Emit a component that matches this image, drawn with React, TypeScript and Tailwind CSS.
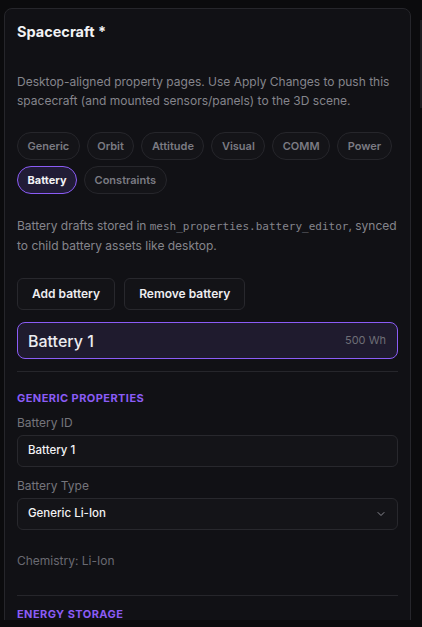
import React from "react";

const tabs = ["Generic", "Orbit", "Attitude", "Visual", "COMM", "Power"];

export default function App() {
  return (
    <div
      className="relative h-[627px] w-[422px] overflow-hidden bg-[#0b0b0d]"
      style={{ fontFamily: "Inter, 'Noto Sans', sans-serif" }}
    >
      <div className="absolute right-0 top-[20px] h-[88px] w-[2px] bg-[#1c1c20]" />
      <div className="h-[620px] overflow-hidden pl-[4px] pt-[8px] w-[411px]">
        <div className="h-[700px] rounded-[8px] border border-[#26262b] bg-[#111115] px-[12px] pt-[13px]">
          <h1 className="text-[14.5px] font-bold leading-[20px] text-[#f2f2f4]">Spacecraft *</h1>
          <p className="mt-[30px] text-[12px] leading-[19px] text-[#85858c]">
            Desktop-aligned property pages. Use Apply Changes to push this spacecraft (and mounted sensors/panels) to the 3D scene.
          </p>
          <div className="mt-[22px] flex flex-wrap gap-x-[7px] gap-y-[6px]">
            {tabs.map((t) => (
              <span
                key={t}
                className="flex h-[28px] items-center rounded-full border border-[#26262b] bg-[#141418] px-[9.5px] text-[11px] font-semibold text-[#7b7b83]"
              >
                {t}
              </span>
            ))}
            <span className="flex h-[28px] items-center rounded-full border border-[#8b5cf6] bg-[#211c36] px-[9.5px] text-[11px] font-bold text-[#f2f2f4]">
              Battery
            </span>
            <span className="flex h-[28px] items-center rounded-full border border-[#26262b] bg-[#141418] px-[9.5px] text-[11px] font-semibold text-[#7b7b83]">
              Constraints
            </span>
          </div>
          <p className="mt-[22px] text-[12px] leading-[19px] text-[#85858c]">
            Battery drafts stored in{" "}
            <code className="text-[11px]" style={{ fontFamily: "'DejaVu Sans Mono', monospace" }}>
              mesh_properties.battery_editor
            </code>
            , synced to child battery assets like desktop.
          </p>
          <div className="mt-[23px] flex gap-[9px]">
            <button className="h-[32px] rounded-[6px] border border-[#28282d] bg-[#131317] px-[14px] text-[12px] font-semibold text-[#ededf0]">
              Add battery
            </button>
            <button className="h-[32px] rounded-[6px] border border-[#28282d] bg-[#131317] px-[14px] text-[12px] font-semibold text-[#ededf0]">
              Remove battery
            </button>
          </div>
          <div className="mt-[12px] flex h-[37px] items-center justify-between rounded-[8px] border border-[#8b5cf6] bg-[#1f1b2e] pl-[10px] pr-[11px]">
            <span className="text-[16px] font-medium text-[#ececf0]">Battery 1</span>
            <span className="text-[11px] text-[#6e6e76]">500 Wh</span>
          </div>
          <div className="mt-[12px] h-px bg-[#26262b]" />
          <div className="mt-[19px] text-[11px] font-bold uppercase leading-[14px] tracking-[0.04em] text-[#8b5cf6]">
            Generic Properties
          </div>
          <div className="mt-[10px] text-[12px] leading-[16px] text-[#75757c]">Battery ID</div>
          <div className="mt-[4px] flex h-[32px] items-center rounded-[6px] border border-[#28282d] bg-[#141418] px-[10px] text-[11.5px] font-medium text-[#f2f2f4]">
            Battery 1
          </div>
          <div className="mt-[11px] text-[12px] leading-[16px] text-[#75757c]">Battery Type</div>
          <div className="mt-[4px] flex h-[32px] items-center justify-between rounded-[6px] border border-[#28282d] bg-[#141418] pl-[10px] pr-[10px] text-[11.5px] font-medium text-[#f2f2f4]">
            <span>Generic Li-Ion</span>
            <svg width="12" height="12" viewBox="0 0 24 24" fill="none" stroke="#8a8a92" strokeWidth="2" strokeLinecap="round" strokeLinejoin="round">
              <path d="m6 9 6 6 6-6" />
            </svg>
          </div>
          <div className="mt-[23px] text-[12px] leading-[16px] text-[#6a6a72]">Chemistry: Li-Ion</div>
          <div className="mt-[26px] h-px bg-[#26262b]" />
          <div className="mt-[11px] text-[11px] font-bold uppercase leading-[14px] tracking-[0.04em] text-[#8b5cf6]">
            Energy Storage
          </div>
        </div>
      </div>
    </div>
  );
}
